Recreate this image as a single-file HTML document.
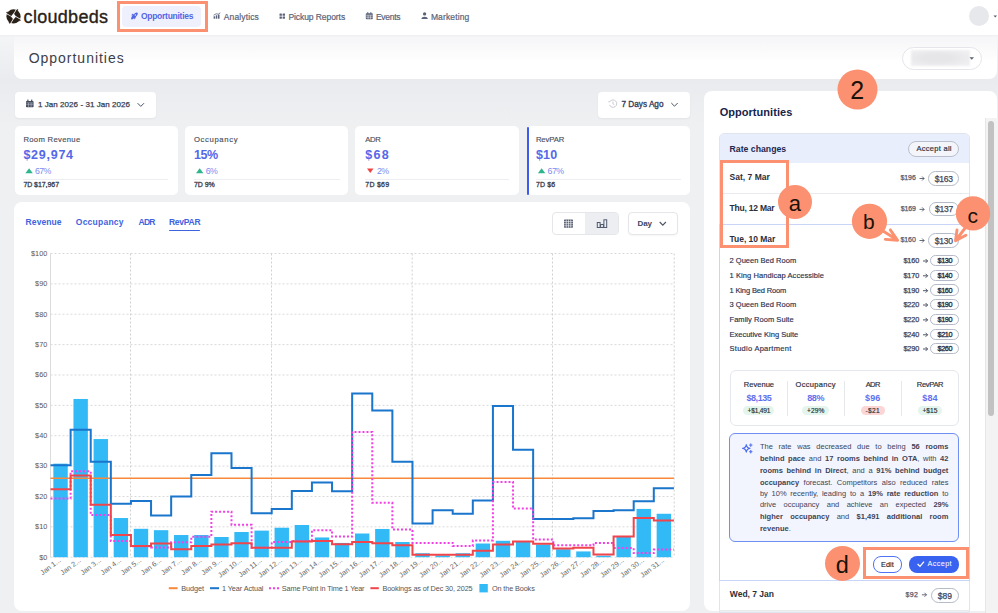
<!DOCTYPE html>
<html><head><meta charset="utf-8"><style>
*{margin:0;padding:0;box-sizing:border-box}
html,body{width:998px;height:613px;overflow:hidden;background:linear-gradient(#f4f5f7 35px,#eaebee 80px,#eff0f2 125px);font-family:"Liberation Sans",sans-serif}
.t{position:absolute;white-space:nowrap}
.b{position:absolute}
svg{position:absolute;left:0;top:0}
</style></head><body>
<div class="b" style="left:0px;top:0px;width:998px;height:35px;background:#fff;box-shadow:0 1px 2px rgba(20,30,50,.03);z-index:2"></div>
<svg width="998" height="35" style="z-index:3">
<defs><mask id="lm" maskUnits="userSpaceOnUse" x="-20" y="-20" width="40" height="40"><rect x="-20" y="-20" width="40" height="40" fill="#fff"/>
<g fill="#000">
<path d="M0,-3.2 L2.6,0 L0,3.2 L-2.6,0 Z"/>
<path d="M-2.6,0.2 L-8,-3 L-8,-3.8 L-2.4,-0.5 Z"/><g transform="rotate(90)"><path d="M-2.6,0.2 L-8,-3 L-8,-3.8 L-2.4,-0.5 Z"/></g><g transform="rotate(180)"><path d="M-2.6,0.2 L-8,-3 L-8,-3.8 L-2.4,-0.5 Z"/></g><g transform="rotate(270)"><path d="M-2.6,0.2 L-8,-3 L-8,-3.8 L-2.4,-0.5 Z"/></g>
</g></mask></defs>
<g mask="url(#lm)" fill="#2a2119" transform="translate(13.5,16.4)">
<circle cx="0" cy="0" r="7.1"/>
<path d="M-7.6,-3.2 L-6.4,-5 L-4.4,-2.4 Z"/><g transform="rotate(90)"><path d="M-7.6,-3.2 L-6.4,-5 L-4.4,-2.4 Z"/></g><g transform="rotate(180)"><path d="M-7.6,-3.2 L-6.4,-5 L-4.4,-2.4 Z"/></g><g transform="rotate(270)"><path d="M-7.6,-3.2 L-6.4,-5 L-4.4,-2.4 Z"/></g>
</g>
</svg>
<div class="t" style="left:23.60px;top:6.00px;font-size:18px;line-height:23.00px;font-weight:400;color:#2a2119;letter-spacing:0.293px;z-index:3;-webkit-text-stroke:0.35px #2a2119">cloudbeds</div>
<div class="b" style="left:122px;top:6px;width:79px;height:21px;background:#eef0fd;border-radius:4px;z-index:3"></div>
<div class="t" style="left:140.90px;top:11.00px;font-size:8.5px;line-height:11.00px;font-weight:700;color:#5366e5;letter-spacing:-0.263px;z-index:3">Opportunities</div>
<svg width="998" height="35" style="z-index:4">
<g fill="#5366e5">
 <ellipse cx="134.6" cy="15.7" rx="1.7" ry="4.1" transform="rotate(45 134.6 15.7)"/>
 <path d="M131,15.2 L133,13.6 L133.8,15.6 Z M134.4,19.6 L136,17.6 L134,16.8 Z"/>
 <circle cx="132" cy="18.6" r=".9"/>
</g>
<circle cx="135.3" cy="15" r=".7" fill="#eef0fd"/>
<g fill="#5b6378">
 <rect x="213.6" y="16.3" width="1.5" height="2.4"/><rect x="215.8" y="15.3" width="1.5" height="3.4"/><rect x="218" y="14.6" width="1.5" height="4.1"/>
 <path d="M213.6,15.2 L216.2,13.8 L218.2,14.2 L220.3,12.8" stroke="#5b6378" stroke-width=".8" fill="none"/>
 <rect x="279.5" y="13.5" width="2.4" height="2.3" rx=".4"/><rect x="282.6" y="13.5" width="2.4" height="2.3" rx=".4"/><rect x="279.5" y="16.4" width="2.4" height="2.3" rx=".4"/><rect x="282.6" y="16.4" width="2.4" height="2.3" rx=".4"/>
 <rect x="365.8" y="13.3" width="7" height="6" rx=".7"/><rect x="367.2" y="12.2" width="1.1" height="1.6"/><rect x="370.3" y="12.2" width="1.1" height="1.6"/>
 <circle cx="424.6" cy="13.9" r="1.65"/><path d="M421.4,19 C421.4,16 427.8,16 427.8,19 Z"/>
</g>
<g stroke="#fff" stroke-width=".5"><path d="M365.8,15.2 H372.8 M368.1,15.2 V19.3 M370.4,15.2 V19.3 M365.8,17.2 H372.8"/></g>
<circle cx="979" cy="16" r="10" fill="#e7e8eb"/>
<path d="M993.5,15.5 L997,15.5 L995.25,17.5 Z" fill="#555b6b"/>
</svg>
<div class="t" style="left:223.80px;top:12.00px;font-size:8.5px;line-height:11.00px;font-weight:400;color:#5b6378;letter-spacing:0.121px;z-index:3;-webkit-text-stroke:0.2px #5b6378">Analytics</div>
<div class="t" style="left:288.40px;top:12.00px;font-size:8.5px;line-height:11.00px;font-weight:400;color:#5b6378;letter-spacing:-0.067px;z-index:3;-webkit-text-stroke:0.2px #5b6378">Pickup Reports</div>
<div class="t" style="left:375.90px;top:12.00px;font-size:8.5px;line-height:11.00px;font-weight:400;color:#5b6378;letter-spacing:-0.264px;z-index:3;-webkit-text-stroke:0.2px #5b6378">Events</div>
<div class="t" style="left:430.90px;top:12.00px;font-size:8.5px;line-height:11.00px;font-weight:400;color:#5b6378;letter-spacing:0.131px;z-index:3;-webkit-text-stroke:0.2px #5b6378">Marketing</div>
<div class="b" style="left:117px;top:1px;width:91px;height:31px;border:3px solid #fb9170;z-index:5"></div>
<div class="b" style="left:14px;top:35px;width:983px;height:44px;background:linear-gradient(#f5f5f7,#fcfcfd 45%,#fff 60%);border-radius:0 0 8px 8px"></div>
<div class="t" style="left:28.70px;top:49.00px;font-size:14px;line-height:18.00px;font-weight:400;color:#3d4048;letter-spacing:0.979px;">Opportunities</div>
<div class="b" style="left:902px;top:46.5px;width:80px;height:23.0px;border:1px solid #e4e6ea;border-radius:12px;background:#fff"></div>
<div class="b" style="left:911px;top:50px;width:59px;height:16px;background:radial-gradient(ellipse at 45% 50%,#e6e6e9 30%,#efeff1 80%);filter:blur(1px)"></div>
<svg width="998" height="80"><path d="M969.5,57.2 L974,57.2 L971.75,59.8 Z" fill="#5a6275"/></svg>
<div class="b" style="left:15px;top:92px;width:141px;height:26px;background:#fff;border-radius:4px;box-shadow:0 1px 2px rgba(0,0,0,.05)"></div>
<div class="t" style="left:38.00px;top:100.00px;font-size:8px;line-height:10.00px;font-weight:400;color:#363d52;letter-spacing:0.053px;-webkit-text-stroke:0.25px #363d52">1 Jan 2026 - 31 Jan 2026</div>
<div class="b" style="left:598px;top:91.5px;width:92px;height:26.5px;background:#fff;border-radius:4px;box-shadow:0 1px 2px rgba(0,0,0,.05)"></div>
<div class="t" style="left:621.40px;top:99.00px;font-size:8.2px;line-height:11.00px;font-weight:400;color:#37415e;letter-spacing:0.026px;-webkit-text-stroke:0.35px #37415e">7 Days Ago</div>
<svg width="998" height="240">
<g fill="#454c61"><rect x="26" y="101" width="7.6" height="6.2" rx=".8"/><rect x="27.3" y="99.6" width="1.2" height="2"/><rect x="31.1" y="99.6" width="1.2" height="2"/></g>
<g stroke="#fff" stroke-width=".45" opacity=".8"><path d="M26,102.9 H33.6 M26,104.7 H33.6 M28.5,102.9 V107.2 M31.1,102.9 V107.2"/></g>
<path d="M137.6,103.2 L140.8,106.4 L144,103.2" fill="none" stroke="#4b5265" stroke-width="1"/>
<path d="M671.3,103 L674.5,106.2 L677.7,103" fill="none" stroke="#4b5265" stroke-width="1"/>
<g fill="none" stroke="#c9cbd0" stroke-width="1"><path d="M610,101.5 A3.7,3.7 0 1 1 609.6,105"/><path d="M612.9,101.6 L612.9,103.7 L614.3,104.6"/></g>
<path d="M608.6,100.6 L610.4,101.8 L608.6,102.8 Z" fill="#c9cbd0"/>
</svg>
<div class="b" style="left:14.7px;top:126px;width:163.3px;height:69px;background:#fff;border-radius:5px;"></div>
<div class="t" style="left:23.40px;top:135.00px;font-size:7.7px;line-height:10.00px;font-weight:400;color:#4b505c;letter-spacing:0.308px;-webkit-text-stroke:0.15px #4b505c">Room Revenue</div>
<div class="t" style="left:23.40px;top:147.00px;font-size:12.5px;line-height:16.00px;font-weight:700;color:#5468e9;letter-spacing:0.745px;">$29,974</div>
<div class="t" style="left:35.10px;top:166.00px;font-size:8.8px;line-height:11.00px;font-weight:400;color:#7b8cf0;letter-spacing:-0.704px;">67%</div>
<div class="b" style="left:23.4px;top:178.5px;width:144.2px;height:1.0px;background:#eceef1"></div>
<div class="t" style="left:23.40px;top:180.00px;font-size:7px;line-height:9.00px;font-weight:400;color:#3a3e4c;letter-spacing:-0.060px;-webkit-text-stroke:0.3px #3a3e4c">7D $17,967</div>
<svg width="998" height="200"><path d="M25.4,173.3 L32.8,173.3 L29.099999999999998,168.3 Z" fill="#2db58b"/></svg>
<div class="b" style="left:185px;top:126px;width:163.3px;height:69px;background:#fff;border-radius:5px;"></div>
<div class="t" style="left:194.00px;top:135.00px;font-size:7.7px;line-height:10.00px;font-weight:400;color:#4b505c;letter-spacing:0.631px;-webkit-text-stroke:0.15px #4b505c">Occupancy</div>
<div class="t" style="left:194.00px;top:147.00px;font-size:12.5px;line-height:16.00px;font-weight:700;color:#5468e9;letter-spacing:-0.406px;">15%</div>
<div class="t" style="left:205.70px;top:166.00px;font-size:8.8px;line-height:11.00px;font-weight:400;color:#7b8cf0;letter-spacing:-0.559px;">6%</div>
<div class="b" style="left:194px;top:178.5px;width:145.7px;height:1.0px;background:#eceef1"></div>
<div class="t" style="left:194.00px;top:180.00px;font-size:7px;line-height:9.00px;font-weight:400;color:#3a3e4c;letter-spacing:-0.062px;-webkit-text-stroke:0.3px #3a3e4c">7D 9%</div>
<svg width="998" height="200"><path d="M196,173.3 L203.4,173.3 L199.7,168.3 Z" fill="#2db58b"/></svg>
<div class="b" style="left:355px;top:126px;width:164.29999999999995px;height:69px;background:#fff;border-radius:5px;"></div>
<div class="t" style="left:365.30px;top:135.00px;font-size:7.7px;line-height:10.00px;font-weight:400;color:#4b505c;letter-spacing:-0.386px;-webkit-text-stroke:0.15px #4b505c">ADR</div>
<div class="t" style="left:365.30px;top:147.00px;font-size:12.5px;line-height:16.00px;font-weight:700;color:#5468e9;letter-spacing:1.215px;">$68</div>
<div class="t" style="left:377.00px;top:166.00px;font-size:8.8px;line-height:11.00px;font-weight:400;color:#7b8cf0;letter-spacing:-0.559px;">2%</div>
<div class="b" style="left:365.3px;top:178.5px;width:144.2px;height:1.0px;background:#eceef1"></div>
<div class="t" style="left:365.30px;top:180.00px;font-size:7px;line-height:9.00px;font-weight:400;color:#3a3e4c;letter-spacing:0.255px;-webkit-text-stroke:0.3px #3a3e4c">7D $69</div>
<svg width="998" height="200"><path d="M367.0,168.5 L373.5,168.5 L370.25,173 Z" fill="#ef4444"/></svg>
<div class="b" style="left:527px;top:126px;width:163px;height:69px;background:#fff;border-radius:5px;"></div>
<div class="b" style="left:527px;top:126.5px;width:2.2999999999999545px;height:68.0px;background:#3d5af1;border-radius:2px"></div>
<div class="t" style="left:535.90px;top:135.00px;font-size:7.7px;line-height:10.00px;font-weight:400;color:#4b505c;letter-spacing:-0.076px;-webkit-text-stroke:0.15px #4b505c">RevPAR</div>
<div class="t" style="left:535.90px;top:147.00px;font-size:12.5px;line-height:16.00px;font-weight:700;color:#5468e9;letter-spacing:0.248px;">$10</div>
<div class="t" style="left:547.60px;top:166.00px;font-size:8.8px;line-height:11.00px;font-weight:400;color:#7b8cf0;letter-spacing:-0.571px;">67%</div>
<div class="b" style="left:535.9px;top:178.5px;width:145.0px;height:1.0px;background:#eceef1"></div>
<div class="t" style="left:535.90px;top:180.00px;font-size:7px;line-height:9.00px;font-weight:400;color:#3a3e4c;letter-spacing:0.124px;-webkit-text-stroke:0.3px #3a3e4c">7D $6</div>
<svg width="998" height="200"><path d="M537.9,173.3 L545.3,173.3 L541.6,168.3 Z" fill="#2db58b"/></svg>
<div class="b" style="left:14px;top:202px;width:676px;height:409px;background:#fff;border-radius:8px"></div>
<div class="t" style="left:25.60px;top:217.00px;font-size:8.5px;line-height:11.00px;font-weight:700;color:#3e63df;letter-spacing:0.095px;">Revenue</div>
<div class="t" style="left:75.80px;top:217.00px;font-size:8.5px;line-height:11.00px;font-weight:700;color:#3e63df;letter-spacing:0.242px;">Occupancy</div>
<div class="t" style="left:138.50px;top:217.00px;font-size:8.5px;line-height:11.00px;font-weight:700;color:#3e63df;letter-spacing:-0.739px;">ADR</div>
<div class="t" style="left:169.00px;top:217.00px;font-size:8.5px;line-height:11.00px;font-weight:700;color:#3e63df;letter-spacing:-0.268px;">RevPAR</div>
<div class="b" style="left:169px;top:229.6px;width:31.30000000000001px;height:1.8000000000000114px;background:#3e63df;border-radius:1px"></div>
<div class="b" style="left:551.7px;top:212.3px;width:67.29999999999995px;height:22.299999999999983px;border:1px solid #e4e6ea;border-radius:4px;background:#fff;overflow:hidden"></div>
<div class="b" style="left:585px;top:213.3px;width:33px;height:20.299999999999983px;background:#eceef2;border-radius:0 3px 3px 0"></div>
<div class="b" style="left:627.6px;top:212.3px;width:50.69999999999993px;height:22.299999999999983px;border:1px solid #e4e6ea;border-radius:4px;background:#fff;box-shadow:0 1px 2px rgba(0,0,0,.04)"></div>
<div class="t" style="left:637.40px;top:219.00px;font-size:8px;line-height:10.00px;font-weight:700;color:#3b4664;letter-spacing:-0.025px;">Day</div>
<svg width="998" height="240">
<g fill="#525a6e"><rect x="564" y="219.5" width="9" height="8.3" rx=".8"/></g>
<g stroke="#fff" stroke-width=".6"><path d="M566.25,219.5 V227.8 M568.5,219.5 V227.8 M570.75,219.5 V227.8 M564,221.6 H573 M564,223.7 H573 M564,225.8 H573"/></g>
<g fill="none" stroke="#525a6e" stroke-width="1"><rect x="597.3" y="222.5" width="2.8" height="5" /><rect x="600.6" y="224.5" width="2.8" height="3"/><rect x="603.9" y="219.8" width="2.8" height="7.7"/></g>
<path d="M659.7,222 L662.8,225.1 L665.9,222" fill="none" stroke="#4b5265" stroke-width="1.1"/>
</svg>
<svg width="998" height="613" style="z-index:1">
<path d="M50.5,557.20 H673.9 M50.5,526.83 H673.9 M50.5,496.46 H673.9 M50.5,466.09 H673.9 M50.5,435.72 H673.9 M50.5,405.35 H673.9 M50.5,374.98 H673.9 M50.5,344.61 H673.9 M50.5,314.24 H673.9 M50.5,283.87 H673.9 M50.5,253.50 H673.9" stroke="#d9d9d9" stroke-width="1" stroke-dasharray="2,2" fill="none"/>
<path d="M130.50,253.50 V557.20 M271.50,253.50 V557.20 M412.20,253.50 V557.20 M552.50,253.50 V557.20 M674.20,253.50 V557.20" stroke="#d0d0d0" stroke-width="1" stroke-dasharray="2,2" fill="none"/>
<path d="M50.50,253.50 V557.20" stroke="#dcdcdc" stroke-width="1" fill="none"/>
<rect x="53.35" y="463.66" width="14.4" height="93.54" fill="#32baf6"/>
<rect x="73.46" y="398.97" width="14.4" height="158.23" fill="#32baf6"/>
<rect x="93.58" y="439.06" width="14.4" height="118.14" fill="#32baf6"/>
<rect x="113.68" y="518.02" width="14.4" height="39.18" fill="#32baf6"/>
<rect x="133.80" y="528.80" width="14.4" height="28.40" fill="#32baf6"/>
<rect x="153.91" y="530.17" width="14.4" height="27.03" fill="#32baf6"/>
<rect x="174.02" y="535.03" width="14.4" height="22.17" fill="#32baf6"/>
<rect x="194.12" y="535.03" width="14.4" height="22.17" fill="#32baf6"/>
<rect x="214.24" y="537.00" width="14.4" height="20.20" fill="#32baf6"/>
<rect x="234.34" y="531.99" width="14.4" height="25.21" fill="#32baf6"/>
<rect x="254.45" y="530.63" width="14.4" height="26.57" fill="#32baf6"/>
<rect x="274.56" y="527.74" width="14.4" height="29.46" fill="#32baf6"/>
<rect x="294.68" y="525.01" width="14.4" height="32.19" fill="#32baf6"/>
<rect x="314.79" y="537.46" width="14.4" height="19.74" fill="#32baf6"/>
<rect x="334.89" y="542.93" width="14.4" height="14.27" fill="#32baf6"/>
<rect x="355.00" y="533.51" width="14.4" height="23.69" fill="#32baf6"/>
<rect x="375.12" y="528.96" width="14.4" height="28.24" fill="#32baf6"/>
<rect x="395.23" y="542.02" width="14.4" height="15.18" fill="#32baf6"/>
<rect x="415.33" y="553.25" width="14.4" height="3.95" fill="#32baf6"/>
<rect x="435.44" y="555.38" width="14.4" height="1.82" fill="#32baf6"/>
<rect x="455.56" y="553.25" width="14.4" height="3.95" fill="#32baf6"/>
<rect x="475.67" y="543.53" width="14.4" height="13.67" fill="#32baf6"/>
<rect x="495.77" y="540.80" width="14.4" height="16.40" fill="#32baf6"/>
<rect x="515.88" y="542.02" width="14.4" height="15.18" fill="#32baf6"/>
<rect x="535.99" y="544.44" width="14.4" height="12.76" fill="#32baf6"/>
<rect x="556.10" y="549.30" width="14.4" height="7.90" fill="#32baf6"/>
<rect x="576.21" y="551.43" width="14.4" height="5.77" fill="#32baf6"/>
<rect x="596.32" y="555.68" width="14.4" height="1.52" fill="#32baf6"/>
<rect x="616.43" y="537.00" width="14.4" height="20.20" fill="#32baf6"/>
<rect x="636.54" y="508.91" width="14.4" height="48.29" fill="#32baf6"/>
<rect x="656.65" y="513.77" width="14.4" height="43.43" fill="#32baf6"/>
<path d="M50.50,478.24 H673.91" stroke="#f8893a" stroke-width="1.6" fill="none"/>
<path d="M50.50,465.18 H70.61 V429.65 H90.72 V461.84 H110.83 V503.75 H130.94 V501.02 H151.05 V515.59 H171.16 V496.46 H191.27 V474.90 H211.38 V453.33 H231.49 V467.91 H251.60 V513.16 H271.71 V508.91 H291.82 V490.99 H311.93 V482.49 H332.04 V491.30 H352.15 V393.51 H372.26 V410.51 H392.37 V461.84 H412.48 V523.49 H432.59 V510.13 H452.70 V513.77 H472.81 V500.41 H492.92 V405.96 H513.03 V449.69 H533.14 V518.93 H553.25 V518.93 H573.36 V518.33 H593.47 V511.04 H613.58 V510.13 H633.69 V501.32 H653.80 V488.26 H673.91" stroke="#1a75cc" stroke-width="2" fill="none"/>
<path d="M50.50,498.59 H70.61 V471.25 H90.72 V514.99 H110.83 V541.10 H130.94 V546.27 H151.05 V547.48 H171.16 V542.32 H191.27 V536.85 H211.38 V511.65 H231.49 V524.70 H251.60 V547.79 H271.71 V542.02 H291.82 V541.10 H311.93 V530.17 H332.04 V536.55 H352.15 V432.08 H372.26 V502.84 H392.37 V529.56 H412.48 V542.93 H432.59 V542.93 H452.70 V545.96 H472.81 V540.50 H492.92 V481.88 H513.03 V508.61 H533.14 V539.59 H553.25 V545.20 H573.36 V545.20 H593.47 V542.93 H613.58 V548.09 H633.69 V553.10 H653.80 V549.61 H673.91" stroke="#f23fe6" stroke-width="2" stroke-dasharray="2,2" fill="none"/>
<path d="M50.50,489.17 H70.61 V475.50 H90.72 V504.66 H110.83 V535.03 H130.94 V545.96 H151.05 V543.53 H171.16 V549.30 H191.27 V545.96 H211.38 V544.44 H231.49 V543.23 H251.60 V547.79 H271.71 V547.79 H291.82 V541.41 H311.93 V541.10 H332.04 V544.14 H352.15 V542.02 H372.26 V543.23 H392.37 V545.36 H412.48 V554.77 H432.59 V554.77 H452.70 V554.77 H472.81 V550.82 H492.92 V544.44 H513.03 V541.41 H533.14 V543.84 H553.25 V548.39 H573.36 V547.79 H593.47 V554.62 H613.58 V536.55 H633.69 V518.02 H653.80 V520.45 H673.91" stroke="#f0454c" stroke-width="2" fill="none"/>
<text x="47.3" y="559.60" text-anchor="end" font-size="7.3" fill="#555" font-family="Liberation Sans">$0</text>
<text x="47.3" y="529.23" text-anchor="end" font-size="7.3" fill="#555" font-family="Liberation Sans">$10</text>
<text x="47.3" y="498.86" text-anchor="end" font-size="7.3" fill="#555" font-family="Liberation Sans">$20</text>
<text x="47.3" y="468.49" text-anchor="end" font-size="7.3" fill="#555" font-family="Liberation Sans">$30</text>
<text x="47.3" y="438.12" text-anchor="end" font-size="7.3" fill="#555" font-family="Liberation Sans">$40</text>
<text x="47.3" y="407.75" text-anchor="end" font-size="7.3" fill="#555" font-family="Liberation Sans">$50</text>
<text x="47.3" y="377.38" text-anchor="end" font-size="7.3" fill="#555" font-family="Liberation Sans">$60</text>
<text x="47.3" y="347.01" text-anchor="end" font-size="7.3" fill="#555" font-family="Liberation Sans">$70</text>
<text x="47.3" y="316.64" text-anchor="end" font-size="7.3" fill="#555" font-family="Liberation Sans">$80</text>
<text x="47.3" y="286.27" text-anchor="end" font-size="7.3" fill="#555" font-family="Liberation Sans">$90</text>
<text x="47.3" y="255.90" text-anchor="end" font-size="7.3" fill="#555" font-family="Liberation Sans">$100</text>
<text x="61.35" y="561.3" text-anchor="end" font-size="7.2" fill="#666" font-family="Liberation Sans" transform="rotate(-37 61.35 561.3)">Jan 1...</text>
<text x="81.46" y="561.3" text-anchor="end" font-size="7.2" fill="#666" font-family="Liberation Sans" transform="rotate(-37 81.46 561.3)">Jan 2...</text>
<text x="101.58" y="561.3" text-anchor="end" font-size="7.2" fill="#666" font-family="Liberation Sans" transform="rotate(-37 101.58 561.3)">Jan 3...</text>
<text x="121.68" y="561.3" text-anchor="end" font-size="7.2" fill="#666" font-family="Liberation Sans" transform="rotate(-37 121.68 561.3)">Jan 4...</text>
<text x="141.80" y="561.3" text-anchor="end" font-size="7.2" fill="#666" font-family="Liberation Sans" transform="rotate(-37 141.80 561.3)">Jan 5...</text>
<text x="161.91" y="561.3" text-anchor="end" font-size="7.2" fill="#666" font-family="Liberation Sans" transform="rotate(-37 161.91 561.3)">Jan 6...</text>
<text x="182.02" y="561.3" text-anchor="end" font-size="7.2" fill="#666" font-family="Liberation Sans" transform="rotate(-37 182.02 561.3)">Jan 7...</text>
<text x="202.12" y="561.3" text-anchor="end" font-size="7.2" fill="#666" font-family="Liberation Sans" transform="rotate(-37 202.12 561.3)">Jan 8...</text>
<text x="222.24" y="561.3" text-anchor="end" font-size="7.2" fill="#666" font-family="Liberation Sans" transform="rotate(-37 222.24 561.3)">Jan 9...</text>
<text x="242.34" y="561.3" text-anchor="end" font-size="7.2" fill="#666" font-family="Liberation Sans" transform="rotate(-37 242.34 561.3)">Jan 10...</text>
<text x="262.45" y="561.3" text-anchor="end" font-size="7.2" fill="#666" font-family="Liberation Sans" transform="rotate(-37 262.45 561.3)">Jan 11...</text>
<text x="282.56" y="561.3" text-anchor="end" font-size="7.2" fill="#666" font-family="Liberation Sans" transform="rotate(-37 282.56 561.3)">Jan 12...</text>
<text x="302.68" y="561.3" text-anchor="end" font-size="7.2" fill="#666" font-family="Liberation Sans" transform="rotate(-37 302.68 561.3)">Jan 13...</text>
<text x="322.79" y="561.3" text-anchor="end" font-size="7.2" fill="#666" font-family="Liberation Sans" transform="rotate(-37 322.79 561.3)">Jan 14...</text>
<text x="342.89" y="561.3" text-anchor="end" font-size="7.2" fill="#666" font-family="Liberation Sans" transform="rotate(-37 342.89 561.3)">Jan 15...</text>
<text x="363.00" y="561.3" text-anchor="end" font-size="7.2" fill="#666" font-family="Liberation Sans" transform="rotate(-37 363.00 561.3)">Jan 16...</text>
<text x="383.12" y="561.3" text-anchor="end" font-size="7.2" fill="#666" font-family="Liberation Sans" transform="rotate(-37 383.12 561.3)">Jan 17...</text>
<text x="403.23" y="561.3" text-anchor="end" font-size="7.2" fill="#666" font-family="Liberation Sans" transform="rotate(-37 403.23 561.3)">Jan 18...</text>
<text x="423.33" y="561.3" text-anchor="end" font-size="7.2" fill="#666" font-family="Liberation Sans" transform="rotate(-37 423.33 561.3)">Jan 19...</text>
<text x="443.44" y="561.3" text-anchor="end" font-size="7.2" fill="#666" font-family="Liberation Sans" transform="rotate(-37 443.44 561.3)">Jan 20...</text>
<text x="463.56" y="561.3" text-anchor="end" font-size="7.2" fill="#666" font-family="Liberation Sans" transform="rotate(-37 463.56 561.3)">Jan 21...</text>
<text x="483.67" y="561.3" text-anchor="end" font-size="7.2" fill="#666" font-family="Liberation Sans" transform="rotate(-37 483.67 561.3)">Jan 22...</text>
<text x="503.77" y="561.3" text-anchor="end" font-size="7.2" fill="#666" font-family="Liberation Sans" transform="rotate(-37 503.77 561.3)">Jan 23...</text>
<text x="523.88" y="561.3" text-anchor="end" font-size="7.2" fill="#666" font-family="Liberation Sans" transform="rotate(-37 523.88 561.3)">Jan 24...</text>
<text x="543.99" y="561.3" text-anchor="end" font-size="7.2" fill="#666" font-family="Liberation Sans" transform="rotate(-37 543.99 561.3)">Jan 25...</text>
<text x="564.10" y="561.3" text-anchor="end" font-size="7.2" fill="#666" font-family="Liberation Sans" transform="rotate(-37 564.10 561.3)">Jan 26...</text>
<text x="584.21" y="561.3" text-anchor="end" font-size="7.2" fill="#666" font-family="Liberation Sans" transform="rotate(-37 584.21 561.3)">Jan 27...</text>
<text x="604.32" y="561.3" text-anchor="end" font-size="7.2" fill="#666" font-family="Liberation Sans" transform="rotate(-37 604.32 561.3)">Jan 28...</text>
<text x="624.43" y="561.3" text-anchor="end" font-size="7.2" fill="#666" font-family="Liberation Sans" transform="rotate(-37 624.43 561.3)">Jan 29...</text>
<text x="644.54" y="561.3" text-anchor="end" font-size="7.2" fill="#666" font-family="Liberation Sans" transform="rotate(-37 644.54 561.3)">Jan 30...</text>
<text x="664.65" y="561.3" text-anchor="end" font-size="7.2" fill="#666" font-family="Liberation Sans" transform="rotate(-37 664.65 561.3)">Jan 31...</text>
<path d="M168.8,588.2 H177.6" stroke="#f8893a" stroke-width="2"/>
<path d="M210,588.2 H219" stroke="#1a75cc" stroke-width="2"/>
<path d="M269,588.2 H279" stroke="#f23fe6" stroke-width="2" stroke-dasharray="2,2"/>
<path d="M370.4,588.2 H378.8" stroke="#f0454c" stroke-width="2"/>
<rect x="479.4" y="584.0" width="8.4" height="8.4" fill="#32baf6"/>
</svg>
<div class="t" style="left:181.20px;top:584.00px;font-size:7.3px;line-height:9.00px;font-weight:400;color:#555;letter-spacing:-0.056px;">Budget</div>
<div class="t" style="left:222.00px;top:584.00px;font-size:7.3px;line-height:9.00px;font-weight:400;color:#555;letter-spacing:-0.094px;">1 Year Actual</div>
<div class="t" style="left:281.80px;top:584.00px;font-size:7.3px;line-height:9.00px;font-weight:400;color:#555;letter-spacing:-0.137px;">Same Point in Time 1 Year</div>
<div class="t" style="left:382.40px;top:584.00px;font-size:7.3px;line-height:9.00px;font-weight:400;color:#555;letter-spacing:-0.116px;">Bookings as of Dec 30, 2025</div>
<div class="t" style="left:491.90px;top:584.00px;font-size:7.3px;line-height:9.00px;font-weight:400;color:#555;letter-spacing:-0.119px;">On the Books</div>
<div class="b" style="left:704px;top:91px;width:293px;height:520px;background:#fff;border-radius:8px"></div>
<div class="t" style="left:719.70px;top:105.00px;font-size:11px;line-height:14.00px;font-weight:700;color:#17244a;letter-spacing:0.038px;">Opportunities</div>
<div class="b" style="left:719px;top:133px;width:251px;height:480px;border:1px solid #dfe4ee;border-radius:5px 5px 0 0"></div>
<div class="b" style="left:720px;top:134px;width:249px;height:29.400000000000006px;background:#e9eefc;border-radius:4px 4px 0 0"></div>
<div class="t" style="left:729.50px;top:144.00px;font-size:8.7px;line-height:11.00px;font-weight:700;color:#1b2850;letter-spacing:0.019px;">Rate changes</div>
<div class="b" style="left:908.3px;top:141px;width:51.10000000000002px;height:15.5px;border:1px solid #b9bfcc;border-radius:8px;background:#f3f5fb"></div>
<div class="t" style="left:916.40px;top:144.00px;font-size:7.5px;line-height:10.00px;font-weight:400;color:#2d3446;letter-spacing:0.288px;-webkit-text-stroke:0.2px #2d3446">Accept all</div>
<div class="t" style="left:729.50px;top:172.00px;font-size:8.5px;line-height:11.00px;font-weight:700;color:#2b2f3a;letter-spacing:0.014px;">Sat, 7 Mar</div>
<div class="t" style="left:900.40px;top:173.00px;font-size:7px;line-height:9.00px;font-weight:400;color:#545a6b;letter-spacing:-0.043px;-webkit-text-stroke:0.25px #545a6b">$196</div>
<svg width="998" height="613"><path d="M919.50,178.50 H924.10 M922.10,176.50 L924.10,178.50 L922.10,180.50" fill="none" stroke="#545a6b" stroke-width="0.9"/></svg>
<div class="b" style="left:928px;top:171px;width:31.399999999999977px;height:15.199999999999989px;border:1px solid #b4bac7;border-radius:8px;background:#fff"></div>
<div class="t" style="left:934.70px;top:174.00px;font-size:8.5px;line-height:11.00px;font-weight:400;color:#40465a;letter-spacing:-0.227px;-webkit-text-stroke:0.25px #40465a">$163</div>
<div class="b" style="left:720px;top:193.3px;width:249px;height:1.0px;background:#e8eaee"></div>
<div class="t" style="left:729.50px;top:203.00px;font-size:8.5px;line-height:11.00px;font-weight:700;color:#2b2f3a;letter-spacing:-0.212px;">Thu, 12 Mar</div>
<div class="t" style="left:900.80px;top:204.00px;font-size:7px;line-height:9.00px;font-weight:400;color:#545a6b;letter-spacing:-0.143px;-webkit-text-stroke:0.25px #545a6b">$169</div>
<svg width="998" height="613"><path d="M919.50,209.40 H924.10 M922.10,207.40 L924.10,209.40 L922.10,211.40" fill="none" stroke="#545a6b" stroke-width="0.9"/></svg>
<div class="b" style="left:928.5px;top:201.7px;width:30.899999999999977px;height:14.800000000000011px;border:1px solid #b4bac7;border-radius:8px;background:#fff"></div>
<div class="t" style="left:934.95px;top:204.00px;font-size:8.5px;line-height:11.00px;font-weight:400;color:#40465a;letter-spacing:-0.227px;-webkit-text-stroke:0.25px #40465a">$137</div>
<div class="b" style="left:719px;top:223.5px;width:251px;height:357.0px;border:1px solid #c8d5f7;border-bottom-width:1.5px"></div>
<div class="t" style="left:729.50px;top:234.00px;font-size:8.5px;line-height:11.00px;font-weight:700;color:#2b2f3a;letter-spacing:-0.031px;">Tue, 10 Mar</div>
<div class="t" style="left:900.40px;top:235.00px;font-size:7px;line-height:9.00px;font-weight:400;color:#545a6b;letter-spacing:-0.043px;-webkit-text-stroke:0.25px #545a6b">$160</div>
<svg width="998" height="613"><path d="M919.50,240.50 H924.10 M922.10,238.50 L924.10,240.50 L922.10,242.50" fill="none" stroke="#545a6b" stroke-width="0.9"/></svg>
<div class="b" style="left:928px;top:232.9px;width:31.399999999999977px;height:14.799999999999983px;border:1px solid #b4bac7;border-radius:8px;background:#fff"></div>
<div class="t" style="left:934.70px;top:236.00px;font-size:8.5px;line-height:11.00px;font-weight:400;color:#40465a;letter-spacing:-0.227px;-webkit-text-stroke:0.25px #40465a">$130</div>
<div class="t" style="left:729.50px;top:256.00px;font-size:7.5px;line-height:10.00px;font-weight:400;color:#283150;letter-spacing:0.025px;-webkit-text-stroke:0.15px #283150">2 Queen Bed Room</div>
<div class="t" style="left:903.40px;top:256.00px;font-size:7.3px;line-height:9.00px;font-weight:400;color:#3d4354;letter-spacing:-0.085px;-webkit-text-stroke:0.25px #3d4354">$160</div>
<svg width="998" height="613"><path d="M923.00,261.00 H927.60 M925.60,259.00 L927.60,261.00 L925.60,263.00" fill="none" stroke="#3d4354" stroke-width="0.9"/></svg>
<div class="b" style="left:930.4px;top:254.7px;width:28.800000000000068px;height:11.600000000000023px;border:1px solid #b4bac7;border-radius:6px;background:#fff"></div>
<div class="t" style="left:937.55px;top:256.00px;font-size:7.3px;line-height:9.00px;font-weight:400;color:#2d3446;letter-spacing:-0.435px;-webkit-text-stroke:0.35px #2d3446">$130</div>
<div class="t" style="left:729.50px;top:271.00px;font-size:7.5px;line-height:10.00px;font-weight:400;color:#283150;letter-spacing:0.079px;-webkit-text-stroke:0.15px #283150">1 King Handicap Accessible</div>
<div class="t" style="left:903.40px;top:271.00px;font-size:7.3px;line-height:9.00px;font-weight:400;color:#3d4354;letter-spacing:-0.085px;-webkit-text-stroke:0.25px #3d4354">$170</div>
<svg width="998" height="613"><path d="M923.00,275.80 H927.60 M925.60,273.80 L927.60,275.80 L925.60,277.80" fill="none" stroke="#3d4354" stroke-width="0.9"/></svg>
<div class="b" style="left:930.4px;top:269.5px;width:28.800000000000068px;height:11.600000000000023px;border:1px solid #b4bac7;border-radius:6px;background:#fff"></div>
<div class="t" style="left:937.55px;top:271.00px;font-size:7.3px;line-height:9.00px;font-weight:400;color:#2d3446;letter-spacing:-0.435px;-webkit-text-stroke:0.35px #2d3446">$140</div>
<div class="t" style="left:729.50px;top:286.00px;font-size:7.5px;line-height:10.00px;font-weight:400;color:#283150;letter-spacing:-0.139px;-webkit-text-stroke:0.15px #283150">1 King Bed Room</div>
<div class="t" style="left:903.40px;top:286.00px;font-size:7.3px;line-height:9.00px;font-weight:400;color:#3d4354;letter-spacing:-0.085px;-webkit-text-stroke:0.25px #3d4354">$190</div>
<svg width="998" height="613"><path d="M923.00,290.70 H927.60 M925.60,288.70 L927.60,290.70 L925.60,292.70" fill="none" stroke="#3d4354" stroke-width="0.9"/></svg>
<div class="b" style="left:930.4px;top:284.4px;width:28.800000000000068px;height:11.600000000000023px;border:1px solid #b4bac7;border-radius:6px;background:#fff"></div>
<div class="t" style="left:937.55px;top:286.00px;font-size:7.3px;line-height:9.00px;font-weight:400;color:#2d3446;letter-spacing:-0.435px;-webkit-text-stroke:0.35px #2d3446">$160</div>
<div class="t" style="left:729.50px;top:300.00px;font-size:7.5px;line-height:10.00px;font-weight:400;color:#283150;letter-spacing:0.025px;-webkit-text-stroke:0.15px #283150">3 Queen Bed Room</div>
<div class="t" style="left:903.40px;top:300.00px;font-size:7.3px;line-height:9.00px;font-weight:400;color:#3d4354;letter-spacing:-0.085px;-webkit-text-stroke:0.25px #3d4354">$220</div>
<svg width="998" height="613"><path d="M923.00,305.00 H927.60 M925.60,303.00 L927.60,305.00 L925.60,307.00" fill="none" stroke="#3d4354" stroke-width="0.9"/></svg>
<div class="b" style="left:930.4px;top:298.7px;width:28.800000000000068px;height:11.600000000000023px;border:1px solid #b4bac7;border-radius:6px;background:#fff"></div>
<div class="t" style="left:937.55px;top:300.00px;font-size:7.3px;line-height:9.00px;font-weight:400;color:#2d3446;letter-spacing:-0.435px;-webkit-text-stroke:0.35px #2d3446">$190</div>
<div class="t" style="left:729.50px;top:315.00px;font-size:7.5px;line-height:10.00px;font-weight:400;color:#283150;letter-spacing:0.050px;-webkit-text-stroke:0.15px #283150">Family Room Suite</div>
<div class="t" style="left:903.40px;top:315.00px;font-size:7.3px;line-height:9.00px;font-weight:400;color:#3d4354;letter-spacing:-0.085px;-webkit-text-stroke:0.25px #3d4354">$220</div>
<svg width="998" height="613"><path d="M923.00,319.90 H927.60 M925.60,317.90 L927.60,319.90 L925.60,321.90" fill="none" stroke="#3d4354" stroke-width="0.9"/></svg>
<div class="b" style="left:930.4px;top:313.59999999999997px;width:28.800000000000068px;height:11.600000000000023px;border:1px solid #b4bac7;border-radius:6px;background:#fff"></div>
<div class="t" style="left:937.55px;top:315.00px;font-size:7.3px;line-height:9.00px;font-weight:400;color:#2d3446;letter-spacing:-0.435px;-webkit-text-stroke:0.35px #2d3446">$190</div>
<div class="t" style="left:729.50px;top:330.00px;font-size:7.5px;line-height:10.00px;font-weight:400;color:#283150;letter-spacing:0.000px;-webkit-text-stroke:0.15px #283150">Executive King Suite</div>
<div class="t" style="left:903.40px;top:330.00px;font-size:7.3px;line-height:9.00px;font-weight:400;color:#3d4354;letter-spacing:-0.085px;-webkit-text-stroke:0.25px #3d4354">$240</div>
<svg width="998" height="613"><path d="M923.00,334.80 H927.60 M925.60,332.80 L927.60,334.80 L925.60,336.80" fill="none" stroke="#3d4354" stroke-width="0.9"/></svg>
<div class="b" style="left:930.4px;top:328.5px;width:28.800000000000068px;height:11.600000000000023px;border:1px solid #b4bac7;border-radius:6px;background:#fff"></div>
<div class="t" style="left:937.55px;top:330.00px;font-size:7.3px;line-height:9.00px;font-weight:400;color:#2d3446;letter-spacing:-0.435px;-webkit-text-stroke:0.35px #2d3446">$210</div>
<div class="t" style="left:729.50px;top:344.00px;font-size:7.5px;line-height:10.00px;font-weight:400;color:#283150;letter-spacing:0.279px;-webkit-text-stroke:0.15px #283150">Studio Apartment</div>
<div class="t" style="left:903.40px;top:344.00px;font-size:7.3px;line-height:9.00px;font-weight:400;color:#3d4354;letter-spacing:-0.085px;-webkit-text-stroke:0.25px #3d4354">$290</div>
<svg width="998" height="613"><path d="M923.00,349.00 H927.60 M925.60,347.00 L927.60,349.00 L925.60,351.00" fill="none" stroke="#3d4354" stroke-width="0.9"/></svg>
<div class="b" style="left:930.4px;top:342.7px;width:28.800000000000068px;height:11.600000000000023px;border:1px solid #b4bac7;border-radius:6px;background:#fff"></div>
<div class="t" style="left:937.55px;top:344.00px;font-size:7.3px;line-height:9.00px;font-weight:400;color:#2d3446;letter-spacing:-0.435px;-webkit-text-stroke:0.35px #2d3446">$260</div>
<div class="b" style="left:729.5px;top:370.2px;width:229.70000000000005px;height:55.80000000000001px;border:1px solid #e4e7ec;border-radius:6px"></div>
<div class="b" style="left:786.8px;top:381px;width:1.0px;height:35px;background:#e6e8ec"></div>
<div class="b" style="left:843.6px;top:381px;width:1.0px;height:35px;background:#e6e8ec"></div>
<div class="b" style="left:901px;top:381px;width:1px;height:35px;background:#e6e8ec"></div>
<div class="t" style="left:743.70px;top:380.00px;font-size:7.5px;line-height:10.00px;font-weight:400;color:#2d3446;letter-spacing:0.054px;-webkit-text-stroke:0.2px #2d3446">Revenue</div>
<div class="t" style="left:746.50px;top:392.00px;font-size:9px;line-height:12.00px;font-weight:700;color:#5d71ee;letter-spacing:-0.455px;">$8,135</div>
<div class="b" style="left:742.5px;top:405.9px;width:31.899999999999977px;height:9.300000000000011px;background:#e3f5ec;border-radius:5px"></div>
<div class="t" style="left:747.45px;top:406.00px;font-size:6.6px;line-height:9.00px;font-weight:400;color:#26302f;letter-spacing:-0.163px;-webkit-text-stroke:0.15px #26302f">+$1,491</div>
<div class="t" style="left:795.55px;top:380.00px;font-size:7.5px;line-height:10.00px;font-weight:400;color:#2d3446;letter-spacing:0.309px;-webkit-text-stroke:0.2px #2d3446">Occupancy</div>
<div class="t" style="left:807.20px;top:392.00px;font-size:9px;line-height:12.00px;font-weight:700;color:#5d71ee;letter-spacing:-0.338px;">88%</div>
<div class="b" style="left:802.3px;top:405.9px;width:26.40000000000009px;height:9.300000000000011px;background:#e3f5ec;border-radius:5px"></div>
<div class="t" style="left:807.00px;top:406.00px;font-size:6.6px;line-height:9.00px;font-weight:400;color:#26302f;letter-spacing:0.084px;-webkit-text-stroke:0.15px #26302f">+29%</div>
<div class="t" style="left:865.75px;top:380.00px;font-size:7.5px;line-height:10.00px;font-weight:400;color:#2d3446;letter-spacing:-0.645px;-webkit-text-stroke:0.2px #2d3446">ADR</div>
<div class="t" style="left:865.10px;top:392.00px;font-size:9px;line-height:12.00px;font-weight:700;color:#5d71ee;letter-spacing:0.061px;">$96</div>
<div class="b" style="left:861.2px;top:405.9px;width:23.59999999999991px;height:9.300000000000011px;background:#fcd5d5;border-radius:5px"></div>
<div class="t" style="left:865.40px;top:406.00px;font-size:6.6px;line-height:9.00px;font-weight:400;color:#26302f;letter-spacing:0.347px;-webkit-text-stroke:0.15px #26302f">-$21</div>
<div class="t" style="left:916.80px;top:380.00px;font-size:7.5px;line-height:10.00px;font-weight:400;color:#2d3446;letter-spacing:-0.300px;-webkit-text-stroke:0.2px #2d3446">RevPAR</div>
<div class="t" style="left:922.25px;top:392.00px;font-size:9px;line-height:12.00px;font-weight:700;color:#5d71ee;letter-spacing:0.161px;">$84</div>
<div class="b" style="left:918.3px;top:405.9px;width:24.200000000000045px;height:9.300000000000011px;background:#e3f5ec;border-radius:5px"></div>
<div class="t" style="left:922.40px;top:406.00px;font-size:6.6px;line-height:9.00px;font-weight:400;color:#26302f;letter-spacing:0.083px;-webkit-text-stroke:0.15px #26302f">+$15</div>
<div class="b" style="left:729.3px;top:433.2px;width:230.0px;height:109.00000000000006px;border:1.6px solid #6f8ff4;border-radius:6px;background:#f3f5fe"></div>
<svg width="998" height="613"><g fill="#4a6cf0" stroke="#4a6cf0" stroke-linejoin="round">
<path d="M746.3,444.6 Q746.8,448 750,448.4 Q746.8,448.8 746.3,452.2 Q745.8,448.8 742.6,448.4 Q745.8,448 746.3,444.6 Z" fill="none" stroke-width="1.1"/>
<path d="M750.8,443.4 Q751,444.9 752.4,445.1 Q751,445.3 750.8,446.8 Q750.6,445.3 749.2,445.1 Q750.6,444.9 750.8,443.4 Z" stroke-width=".5"/>
<path d="M750.8,450 Q751,451.5 752.4,451.7 Q751,451.9 750.8,453.4 Q750.6,451.9 749.2,451.7 Q750.6,451.5 750.8,450 Z" stroke-width=".5"/>
</g></svg>
<div class="t" style="left:759.9px;top:442.40px;width:188.5px;font-size:7.5px;line-height:10px;color:#3e4456;text-align:justify;text-align-last:justify">The rate was decreased due to being <b>56 rooms</b></div>
<div class="t" style="left:759.9px;top:454.00px;width:188.5px;font-size:7.5px;line-height:10px;color:#3e4456;text-align:justify;text-align-last:justify"><b>behind pace</b> and <b>17 rooms behind in OTA</b>, with <b>42</b></div>
<div class="t" style="left:759.9px;top:466.00px;width:188.5px;font-size:7.5px;line-height:10px;color:#3e4456;text-align:justify;text-align-last:justify"><b>rooms behind in Direct</b>, and a <b>91% behind budget</b></div>
<div class="t" style="left:759.9px;top:477.60px;width:188.5px;font-size:7.5px;line-height:10px;color:#3e4456;text-align:justify;text-align-last:justify"><b>occupancy</b> forecast. Competitors also reduced rates</div>
<div class="t" style="left:759.9px;top:489.00px;width:188.5px;font-size:7.5px;line-height:10px;color:#3e4456;text-align:justify;text-align-last:justify">by 10% recently, leading to a <b>19% rate reduction</b> to</div>
<div class="t" style="left:759.9px;top:500.40px;width:188.5px;font-size:7.5px;line-height:10px;color:#3e4456;text-align:justify;text-align-last:justify">drive occupancy and achieve an expected <b>29%</b></div>
<div class="t" style="left:759.9px;top:512.40px;width:188.5px;font-size:7.5px;line-height:10px;color:#3e4456;text-align:justify;text-align-last:justify"><b>higher occupancy</b> and <b>$1,491 additional room</b></div>
<div class="t" style="left:759.9px;top:524.10px;width:188.5px;font-size:7.5px;line-height:10px;color:#3e4456;text-align:justify;text-align-last:left"><b>revenue</b>.</div>
<div class="b" style="left:872.6px;top:556.2px;width:29.699999999999932px;height:16.399999999999977px;border:1.1px solid #4f73f3;border-radius:8px;background:#fff"></div>
<div class="t" style="left:880.95px;top:560.00px;font-size:7.3px;line-height:9.00px;font-weight:400;color:#1f2433;letter-spacing:0.105px;-webkit-text-stroke:0.15px #1f2433">Edit</div>
<div class="b" style="left:908.9px;top:556.2px;width:50.39999999999998px;height:16.399999999999977px;background:#3a62f0;border-radius:8px"></div>
<svg width="998" height="613"><path d="M917.6,564 L920,566.4 L924,561.6" fill="none" stroke="#fff" stroke-width="1.3"/></svg>
<div class="t" style="left:927.50px;top:559.00px;font-size:7.3px;line-height:9.00px;font-weight:400;color:#fff;letter-spacing:0.364px;">Accept</div>
<div class="t" style="left:729.80px;top:589.00px;font-size:8.5px;line-height:11.00px;font-weight:700;color:#2b2f3a;letter-spacing:-0.005px;">Wed, 7 Jan</div>
<div class="t" style="left:905.40px;top:590.00px;font-size:7px;line-height:9.00px;font-weight:400;color:#545a6b;letter-spacing:0.373px;-webkit-text-stroke:0.25px #545a6b">$92</div>
<svg width="998" height="613"><path d="M921.90,594.80 H926.50 M924.50,592.80 L926.50,594.80 L924.50,596.80" fill="none" stroke="#545a6b" stroke-width="0.9"/></svg>
<div class="b" style="left:930.6px;top:588px;width:28.699999999999932px;height:14.700000000000045px;border:1px solid #b4bac7;border-radius:8px;background:#fff"></div>
<div class="t" style="left:937.70px;top:591.00px;font-size:8.5px;line-height:11.00px;font-weight:400;color:#40465a;letter-spacing:0.106px;-webkit-text-stroke:0.25px #40465a">$89</div>
<div class="b" style="left:719px;top:609.5px;width:251px;height:1.0px;background:#e8eaee"></div>
<div class="b" style="left:985px;top:118px;width:13px;height:495px;background:#f3f3f3;border-left:1px solid #e6e6e6"></div>
<div class="b" style="left:987.6px;top:121px;width:6.7999999999999545px;height:295px;background:#c2c2c2;border-radius:4px"></div>
<div class="b" style="left:720.3px;top:160.4px;width:69.0px;height:88.0px;border:3px solid #fb9170;z-index:6"></div>
<div class="b" style="left:863.2px;top:547.2px;width:105.5px;height:31.5px;border:3px solid #fb9170;z-index:6"></div>
<svg width="998" height="613" style="z-index:7">
<circle cx="857.5" cy="89.5" r="20" fill="#fb9170"/>
<circle cx="795" cy="202" r="17" fill="#fb9170"/>
<circle cx="869.5" cy="221.3" r="17.6" fill="#fb9170"/>
<circle cx="973" cy="213.4" r="17.2" fill="#fb9170"/>
<circle cx="842.5" cy="563.4" r="17.5" fill="#fb9170"/>
<g stroke="#fb9170" stroke-width="2.9" fill="none" stroke-linecap="round" stroke-linejoin="round">
<path d="M881,229.8 L897.3,240 M890.3,229.9 L897.6,240.3 L885.3,239.4"/>
<path d="M964.8,228.5 L955.6,240.5 M957,230 L955.5,240.8 L965.9,235.3"/>
</g>
<g font-family="Liberation Sans" fill="#1a1208" text-anchor="middle">
<text x="857.3" y="98.6" font-size="25">2</text>
<text x="794.8" y="210.9" font-size="22">a</text>
<text x="868.9" y="228.8" font-size="21">b</text>
<text x="972.8" y="222.8" font-size="21">c</text>
<text x="842.3" y="573.4" font-size="23.5">d</text>
</g>
</svg>
</body></html>
